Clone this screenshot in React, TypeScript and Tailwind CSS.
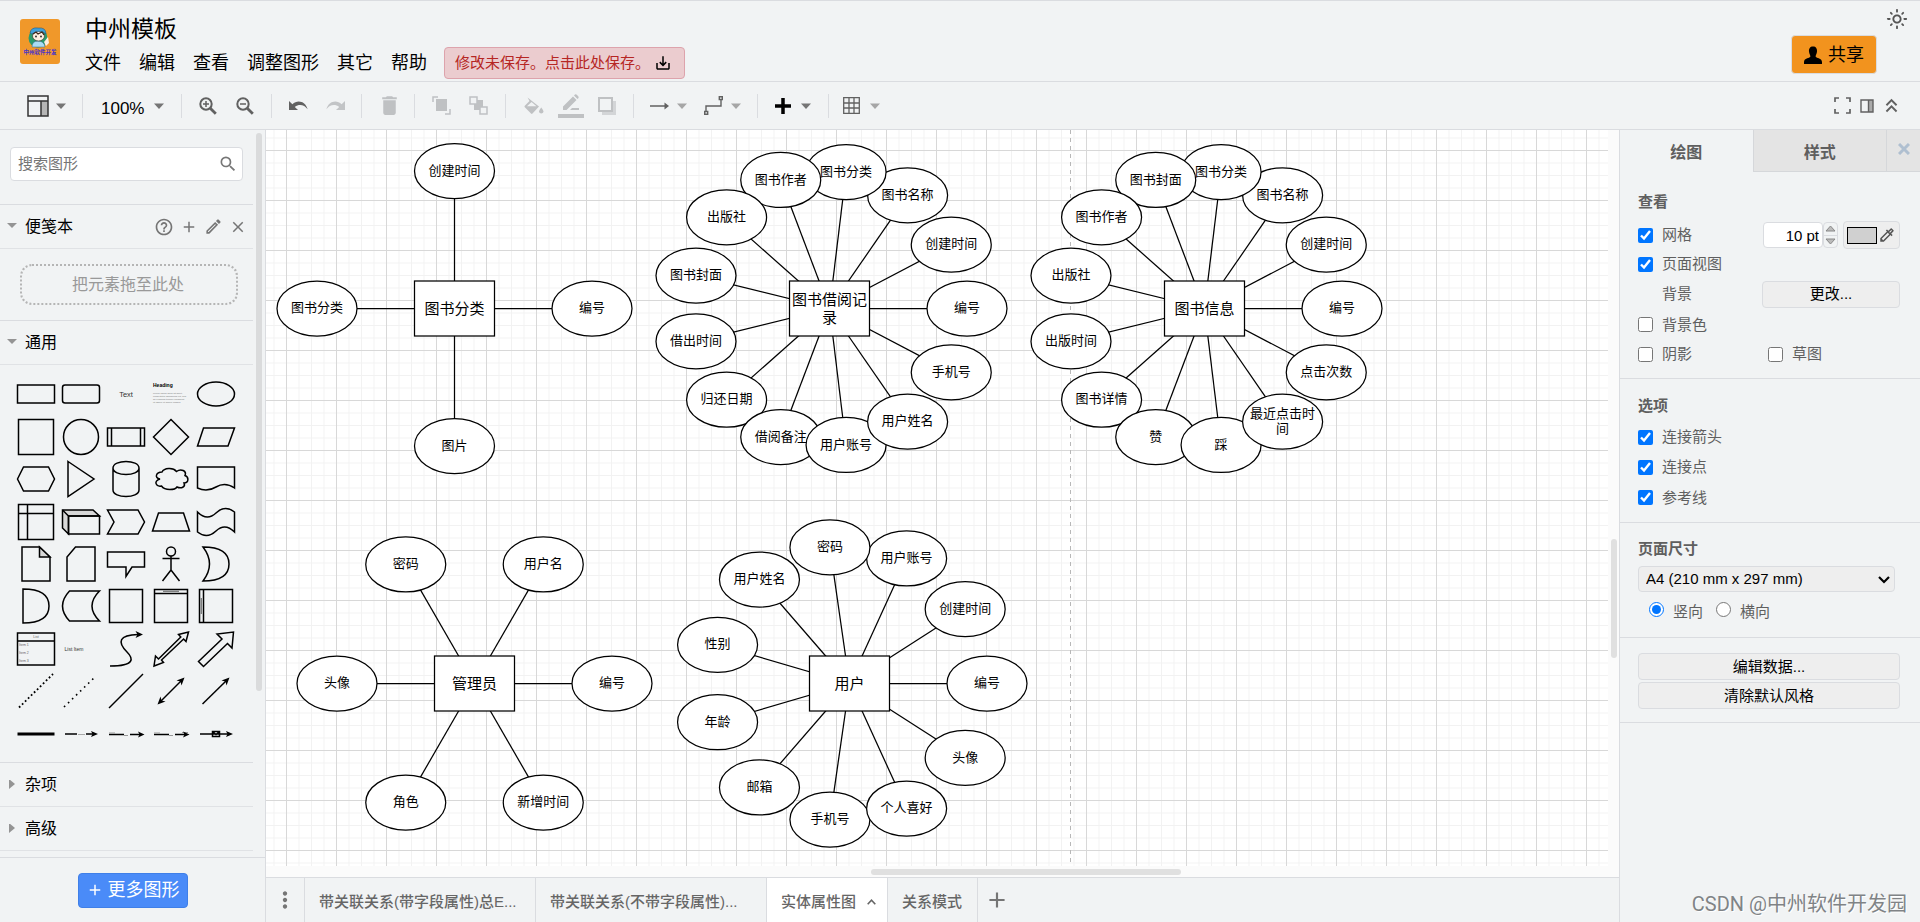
import { ReactNode, useState } from 'react';
import clsx from 'clsx';
import {
  MdAdd,
  MdClose,
  MdDelete,
  MdHelpOutline,
  MdKeyboardDoubleArrowUp,
  MdMoreVert,
  MdOutlineColorize,
  MdOutlineEdit,
  MdOutlineLightMode,
  MdSaveAlt,
  MdSearch,
} from 'react-icons/md';

interface Entity {
  name: string[];
  x: number;
  y: number;
  // counter-clockwise, starting on the right
  fields: string[];
}

const RADIUS = 137.5;
const NODE_W = 80;
const NODE_H = 55;
const MAX_CHARS = 5;

const ENTITIES: Entity[] = [
  { name: ['图书分类'], x: 188.5, y: 178.5, fields: ['编号', '创建时间', '图书分类', '图片'] },
  {
    name: ['图书借阅记', '录'],
    x: 563.5,
    y: 178.5,
    fields: [
      '编号', '创建时间', '图书名称', '图书分类', '图书作者', '出版社', '图书封面',
      '借出时间', '归还日期', '借阅备注', '用户账号', '用户姓名', '手机号',
    ],
  },
  {
    name: ['图书信息'],
    x: 938.5,
    y: 178.5,
    fields: [
      '编号', '创建时间', '图书名称', '图书分类', '图书封面', '图书作者', '出版社',
      '出版时间', '图书详情', '赞', '踩', '最近点击时间', '点击次数',
    ],
  },
  { name: ['管理员'], x: 208.5, y: 553.5, fields: ['编号', '用户名', '密码', '头像', '角色', '新增时间'] },
  {
    name: ['用户'],
    x: 583.5,
    y: 553.5,
    fields: ['编号', '创建时间', '用户账号', '密码', '用户姓名', '性别', '年龄', '邮箱', '手机号', '个人喜好', '头像'],
  },
];

function wrap(text: string): string[] {
  return text.length > MAX_CHARS ? [text.slice(0, MAX_CHARS), text.slice(MAX_CHARS)] : [text];
}

function Label({ lines, x, y, size, leading }: { lines: string[]; x: number; y: number; size: number; leading: number }) {
  return (
    <text x={x} textAnchor="middle" fontSize={size}>
      {lines.map((line, i) => (
        <tspan key={i} x={x} y={y + size * 0.36 + (i - (lines.length - 1) / 2) * leading}>
          {line}
        </tspan>
      ))}
    </text>
  );
}

function EntityGroup({ entity }: { entity: Entity }) {
  const nodes = entity.fields.map((field, i) => {
    const angle = (2 * Math.PI * i) / entity.fields.length;
    return {
      field,
      x: entity.x + RADIUS * Math.cos(angle),
      y: entity.y - RADIUS * Math.sin(angle),
    };
  });

  return (
    <g>
      {nodes.map((n, i) => (
        <line key={i} x1={entity.x} y1={entity.y} x2={n.x} y2={n.y} stroke="#000" strokeWidth={1.25} />
      ))}
      <rect
        x={entity.x - NODE_W / 2}
        y={entity.y - NODE_H / 2}
        width={NODE_W}
        height={NODE_H}
        fill="#fff"
        stroke="#000"
        strokeWidth={1.25}
      />
      <Label lines={entity.name} x={entity.x} y={entity.y} size={15} leading={18} />
      {nodes.map((n, i) => (
        <g key={i}>
          <ellipse cx={n.x} cy={n.y} rx={NODE_W / 2} ry={NODE_H / 2} fill="#fff" stroke="#000" strokeWidth={1.25} />
          <Label lines={wrap(n.field)} x={n.x} y={n.y - 1} size={13} leading={15} />
        </g>
      ))}
    </g>
  );
}

function Canvas() {
  return (
    <svg className="block h-full w-full bg-white">
      <defs>
        <pattern id="minor" x="20" y="20" width="12.5" height="12.5" patternUnits="userSpaceOnUse">
          <path d="M0.5 0V12.5M0 0.5H12.5" stroke="#f2f2f2" fill="none" />
        </pattern>
        <pattern id="major" x="20" y="20" width="50" height="50" patternUnits="userSpaceOnUse">
          <path d="M0.5 0V50M0 0.5H50" stroke="#d8d8d8" fill="none" />
        </pattern>
      </defs>
      <rect width="100%" height="100%" fill="url(#minor)" />
      <rect width="100%" height="100%" fill="url(#major)" />
      <line x1="804.5" y1="0" x2="804.5" y2="100%" stroke="#b8b8b8" strokeDasharray="4 4" />
      {ENTITIES.map((e, i) => (
        <EntityGroup key={i} entity={e} />
      ))}
    </svg>
  );
}

function Caret({ dark = false }: { dark?: boolean }) {
  return (
    <svg width="10" height="6" viewBox="0 0 10 6" className={dark ? 'text-[#757575]' : 'text-[#a6a6a6]'}>
      <path d="M0 0.5H10L5 6Z" fill="currentColor" />
    </svg>
  );
}

function ToolGroup({ className, children }: { className: string; children: ReactNode }) {
  return <div className={clsx('flex h-6 items-center border-r border-[#dadce0]', className)}>{children}</div>;
}

function ToolButton({ label, children, className }: { label: string; children: ReactNode; className?: string }) {
  return (
    <button aria-label={label} className={clsx('flex items-center', className)}>
      {children}
    </button>
  );
}

function Undo({ flip = false }: { flip?: boolean }) {
  return (
    <svg width="19" height="13" viewBox="0 0 19 13" className={flip ? '-scale-x-100 text-[#c2c4c6]' : 'text-[#616161]'}>
      <path d="M0 2V11H9L5.8 7.9C10 4.6 15.4 5.6 18.6 10.2C16.6 2.4 8.6 0.2 3.4 5.2Z" fill="currentColor" />
    </svg>
  );
}

function Magnifier({ plus = false }: { plus?: boolean }) {
  return (
    <svg width="18" height="18" viewBox="0 0 18 18" fill="none" stroke="#616161">
      <circle cx="7" cy="7" r="5.7" strokeWidth="2" />
      <path d="M11 11L16.8 16.8" strokeWidth="2.8" />
      <path d={plus ? 'M4 7H10M7 4V10' : 'M4 7H10'} strokeWidth="1.5" />
    </svg>
  );
}

function Toolbar() {
  return (
    <div className="flex h-12 items-center justify-between border-b border-[#dadce0]">
      <div className="flex items-center">
        <ToolGroup className="w-[83px] pl-[27px]">
          <ToolButton label="视图" className="gap-[7px]">
            <svg width="22" height="22" viewBox="0 0 22 22">
              <rect x="14" y="6" width="7" height="15" fill="#b5b5b5" />
              <path d="M1 1H21V21H1ZM1 6H21M14 6V21" fill="none" stroke="#333" strokeWidth="1.5" />
            </svg>
            <Caret dark />
          </ToolButton>
        </ToolGroup>
        <ToolGroup className="w-[99px] pl-[18px]">
          <button className="flex items-center gap-[10px] text-[17px]">
            <span className="pt-[6px] leading-5">100%</span>
            <Caret dark />
          </button>
        </ToolGroup>
        <ToolGroup className="w-[90px] justify-center gap-[19px]">
          <ToolButton label="放大"><Magnifier plus /></ToolButton>
          <ToolButton label="缩小"><Magnifier /></ToolButton>
        </ToolGroup>
        <ToolGroup className="w-[90px] justify-center gap-[18px]">
          <ToolButton label="撤销"><Undo /></ToolButton>
          <ToolButton label="重做"><Undo flip /></ToolButton>
        </ToolGroup>
        <ToolGroup className="w-[53px] justify-center pl-[2px]">
          <ToolButton label="删除"><MdDelete size={25} color="#bfc1c3" /></ToolButton>
        </ToolGroup>
        <ToolGroup className="w-[91px] justify-center gap-[18px]">
          <ToolButton label="移至最前">
            <svg width="19" height="19" viewBox="0 0 19 19">
              <path d="M1 6V1H6M18 13V18H13" fill="none" stroke="#bfc1c3" strokeWidth="1.5" />
              <rect x="4" y="3" width="11" height="12" fill="#bfc1c3" />
            </svg>
          </ToolButton>
          <ToolButton label="移至最后">
            <svg width="19" height="19" viewBox="0 0 19 19">
              <path d="M5 4H14V14H5Z" fill="#bfc1c3" />
              <path d="M1 1H8V8H1ZM11 11H18V18H11Z" fill="#f1f3f4" stroke="#bfc1c3" strokeWidth="1.5" />
            </svg>
          </ToolButton>
        </ToolGroup>
        <ToolGroup className="w-[128px] justify-center gap-[14px]">
          <ToolButton label="填充颜色">
            <svg width="20" height="18" viewBox="0 0 20 18" fill="#bfc1c3">
              <path d="M3.5 0.5L15 9.5L8.5 16.5C8 17 7.4 17 7 16.5L0.8 10.3C0.3 9.8 0.3 9.2 0.8 8.7L5.5 4Z" />
              <path d="M7.5 5L12.5 9.2H3Z" fill="#f1f3f4" />
              <path d="M17.2 10.5S19.5 13.2 19.5 14.8A2.3 2.3 0 0 1 15 14.8C15 13.2 17.2 10.5 17.2 10.5Z" />
            </svg>
          </ToolButton>
          <ToolButton label="线条颜色">
            <svg width="26" height="24" viewBox="0 0 26 24" fill="#bfc1c3">
              <path d="M5 16V12.5L15 2.5L18.5 6L8.5 16ZM16 1.5L17 0.5Q18 0 18.8 0.8L20.2 2.2Q21 3 20.5 4L19.5 5ZM12 16L14 14H21V16Z" />
              <rect y="20" width="26" height="4" />
            </svg>
          </ToolButton>
          <ToolButton label="阴影">
            <svg width="18" height="18" viewBox="0 0 18 18">
              <rect x="4" y="4" width="14" height="14" fill="#d3d5d7" />
              <rect x="1" y="1" width="13" height="13" fill="#f1f3f4" stroke="#bfc1c3" strokeWidth="2" />
            </svg>
          </ToolButton>
        </ToolGroup>
        <ToolGroup className="w-[124px] justify-center gap-[17px]">
          <ToolButton label="连接" className="gap-2">
            <svg width="19" height="8" viewBox="0 0 19 8">
              <path d="M0 4H16" stroke="#616161" strokeWidth="1.5" />
              <path d="M14.5 0.5L19 4L14.5 7.5Z" fill="#616161" />
            </svg>
            <Caret />
          </ToolButton>
          <ToolButton label="航点" className="gap-2">
            <svg width="19" height="19" viewBox="0 0 19 19">
              <path d="M2 15V10H17V4M0.7 15.5H3.7V18.3H0.7ZM15.3 0.7H18.3V3.5H15.3Z" fill="none" stroke="#616161" strokeWidth="1.4" />
            </svg>
            <Caret />
          </ToolButton>
        </ToolGroup>
        <ToolGroup className="w-[71px] justify-center">
          <ToolButton label="插入" className="gap-[10px]">
            <svg width="16" height="16" viewBox="0 0 16 16">
              <path d="M8 0V16M0 8H16" stroke="#000" strokeWidth="3.5" />
            </svg>
            <Caret dark />
          </ToolButton>
        </ToolGroup>
        <ToolButton label="表格" className="ml-[14px] gap-[10px]">
          <svg width="17" height="17" viewBox="0 0 17 17">
            <path
              d="M0.7 0.7H16.3V16.3H0.7ZM0.7 6H16.3M0.7 11H16.3M6 0.7V16.3M11 0.7V16.3"
              fill="none"
              stroke="#616161"
              strokeWidth="1.3"
            />
          </svg>
          <Caret />
        </ToolButton>
      </div>
      <div className="flex items-center gap-[9px] pr-[17px] text-[#616161]">
        <ToolButton label="全屏">
          <svg width="17" height="17" viewBox="0 0 17 17">
            <path d="M1 5V1H5M12 1H16V5M16 12V16H12M5 16H1V12" fill="none" stroke="currentColor" strokeWidth="1.7" />
          </svg>
        </ToolButton>
        <ToolButton label="格式">
          <svg width="14" height="14" viewBox="0 0 14 14">
            <rect x="9" y="1" width="4" height="12" fill="#aaa" />
            <path d="M1 1H13V13H1ZM8.5 1V13" fill="none" stroke="currentColor" strokeWidth="1.4" />
          </svg>
        </ToolButton>
        <ToolButton label="收起" className="-ml-[3px]"><MdKeyboardDoubleArrowUp size={23} /></ToolButton>
      </div>
    </div>
  );
}

function Logo() {
  return (
    <svg width="40" height="45" viewBox="0 0 40 45" className="rounded-[3px]">
      <rect width="40" height="45" fill="#f0982a" />
      <circle cx="18" cy="19" r="9.5" fill="#2a9a6b" />
      <path d="M12 28Q12 22 18 22T25 28Z" fill="#a9dcf3" stroke="#35658a" strokeWidth="0.5" />
      <ellipse cx="18.5" cy="17" rx="6" ry="5" fill="#fdeee2" stroke="#3b2a22" strokeWidth="0.6" />
      <path d="M10 14Q11 8 18 9Q26 8 26 15L23 13Q18 11 12 15Z" fill="#3f9fd8" stroke="#1b4d77" strokeWidth="0.5" />
      <path d="M13 15L16 13L18 15L22 13L24 16" fill="none" stroke="#40291e" strokeWidth="1.3" />
      <circle cx="16" cy="17.5" r="0.9" fill="#222" />
      <circle cx="21" cy="17.5" r="0.9" fill="#222" />
      <path d="M24 23L28 18L29 24L26 27Z" fill="#fdeee2" />
      <text x="20" y="35" textAnchor="middle" fontSize="5.5" fontWeight="bold" fill="#4a33c8">
        中州软件开发
      </text>
    </svg>
  );
}

function Header() {
  return (
    <header className="flex h-[82px] justify-between border-y border-[#dadce0] pl-5">
      <div className="flex gap-[25px]">
        <a href="#" aria-label="主页" className="mt-[18px] block h-[45px]">
          <Logo />
        </a>
        <div className="pt-[11px]">
          <h1 className="text-[23px] leading-[35px]">中州模板</h1>
          <div className="flex h-8 items-center">
            <nav className="flex gap-[18px] text-lg">
              {['文件', '编辑', '查看', '调整图形', '其它', '帮助'].map(item => (
                <button key={item}>{item}</button>
              ))}
            </nav>
            <button className="ml-[17px] flex h-8 items-center gap-1 rounded-[4px] border border-[#dda3ac] bg-[#ebcccf] pr-3 pl-[10px] text-[15px] text-[#b62623]">
              修改未保存。点击此处保存。
              <MdSaveAlt size={18} color="#000" />
            </button>
          </div>
        </div>
      </div>
      <div className="flex flex-col items-end pr-3">
        <button aria-label="外观" className="mt-[7px] text-[#555]">
          <MdOutlineLightMode size={22} />
        </button>
        <button className="mt-[5px] mr-[31px] flex h-[39px] w-[86px] items-center justify-center gap-[6px] rounded-[4px] border border-[#dadce0] bg-[#f2931e] text-lg">
          <svg width="18" height="18" viewBox="0 0 18 18">
            <path d="M9 0.5C12 0.5 13.2 2.6 13 5.5C12.8 8 11.8 8.8 11.6 10.5C11.8 12.3 18 11.8 18 16V18H0V16C0 11.8 6.2 12.3 6.4 10.5C6.2 8.8 5.2 8 5 5.5C4.8 2.6 6 0.5 9 0.5Z" />
          </svg>
          共享
        </button>
      </div>
    </header>
  );
}

const TINY = { fill: '#333', stroke: 'none' };

// every shape is drawn around 0,0
const SHAPES: { name: string; art: ReactNode }[] = [
  { name: '矩形', art: <rect x="-18.5" y="-9" width="37" height="18" /> },
  { name: '圆角矩形', art: <rect x="-18.5" y="-9" width="37" height="18" rx="2.5" /> },
  { name: '文本', art: <text y="2.5" textAnchor="middle" fontSize="7.5" {...TINY}>Text</text> },
  {
    name: '文本框',
    art: (
      <g {...TINY}>
        <text x="-18" y="-7" fontSize="5" fontWeight="bold" fill="#000">Heading</text>
        <g fill="#777">
          <text x="-18" y="-0.5" fontSize="2.4">Lorem ipsum dolor sit amet,</text>
          <text x="-18" y="2.5" fontSize="2.4">consectetur adipisicing elit, sed</text>
          <text x="-18" y="5.5" fontSize="2.4">do eiusmod tempor incididunt</text>
          <text x="-18" y="8.5" fontSize="2.4">ut labore et dolore magna.</text>
        </g>
      </g>
    ),
  },
  { name: '椭圆', art: <ellipse rx="18.5" ry="12" /> },

  { name: '正方形', art: <rect x="-17.5" y="-17.5" width="35" height="35" /> },
  { name: '圆', art: <circle r="17.5" /> },
  { name: '进程', art: <path d="M-18.5 -9H18.5V9H-18.5ZM-14.5 -9V9M14.5 -9V9" /> },
  { name: '菱形', art: <path d="M0 -17.5L17.5 0L0 17.5L-17.5 0Z" /> },
  { name: '平行四边形', art: <path d="M-18.5 9L-12.5 -9H18.5L12 9Z" /> },

  { name: '六边形', art: <path d="M-18.5 0L-12.5 -12H12.5L18.5 0L12.5 12H-12.5Z" /> },
  { name: '三角形', art: <path d="M-13 -17.5L13 0L-13 17.5Z" /> },
  { name: '圆柱体', art: <path d="M-13 -11V11C-13 19.7 13 19.7 13 11V-11C13 -19.7 -13 -19.7 -13 -11C-13 -2.3 13 -2.3 13 -11" /> },
  {
    name: '云',
    art: <path d="M-9 -7C-15 -7 -17 -1 -11 0C-18 2 -15 8 -9.5 7C-6 12 4 11 6 8C10 10 15 8 13 4C18 4 18 -2 14 -3.5C16 -8 10 -11 5.5 -7.5C2 -12 -7 -11 -9 -7Z" />,
  },
  { name: '文档', art: <path d="M-18.5 -12H18.5V9Q9 2.5 0 8T-18.5 9Z" /> },

  { name: '内部存储', art: <path d="M-17.5 -17.5H17.5V17.5H-17.5ZM-8.5 -17.5V17.5M-17.5 -8.5H17.5" /> },
  {
    name: '立方体',
    art: (
      <>
        <path d="M-18.5 -12H12L18.5 -6H-12.5V12L-18.5 6Z" fill="#d8d8d8" />
        <path d="M-18.5 -12L-12.5 -6H18.5V12H-12.5V-6" />
      </>
    ),
  },
  { name: '步骤', art: <path d="M-18.5 -12H12L18.5 0L12 12H-18.5L-12 0Z" /> },
  { name: '梯形', art: <path d="M-18.5 9L-12.5 -9H12.5L18.5 9Z" /> },
  { name: '磁带', art: <path d="M-18.5 -10Q-9 -0.5 0 -9T18.5 -10V10Q9 0.5 0 9T-18.5 10Z" /> },

  {
    name: '便签',
    art: (
      <>
        <path d="M-14 -17H3.5L14 -7V17H-14Z" />
        <path d="M3.5 -17V-7H14Z" fill="#d8d8d8" />
      </>
    ),
  },
  { name: '卡片', art: <path d="M-5.5 -17H14V17H-14V-7Z" /> },
  { name: '标注', art: <path d="M-18.5 -12H18.5V3H6L0 12.5V3H-18.5Z" /> },
  {
    name: '角色',
    art: (
      <>
        <circle cy="-12.5" r="4.5" />
        <path d="M0 -8V6M-8.5 -5.5H8.5M-8.5 17L0 6L8.5 17" />
      </>
    ),
  },
  { name: '或', art: <path d="M-13 -17Q13 -17 13 0T-13 17Q0 0 -13 -17Z" /> },

  { name: '与', art: <path d="M-13 -17Q13 -17 13 0T-13 17Z" /> },
  { name: '数据存储', art: <path d="M18.5 -15H-11.5Q-25.5 0 -11.5 15H18.5Q3.5 0 18.5 -15Z" /> },
  { name: '容器', art: <rect x="-16.5" y="-16.5" width="33" height="33" /> },
  {
    name: '垂直容器',
    art: (
      <>
        <path d="M-16.5 -16.5H16.5V16.5H-16.5ZM-16.5 -12.5H16.5" />
        <path d="M-8 -14.7H8" strokeWidth="0.6" />
      </>
    ),
  },
  {
    name: '水平容器',
    art: (
      <>
        <path d="M-16.5 -16.5H16.5V16.5H-16.5ZM-12.5 -16.5V16.5" />
        <path d="M-14.7 -8V8" strokeWidth="0.6" />
      </>
    ),
  },

  {
    name: '列表',
    art: (
      <>
        <path d="M-18.5 -16H18.5V16H-18.5ZM-18.5 -8H18.5" />
        <g fontSize="3.5" stroke="none" fill="#666">
          <text y="-11" textAnchor="middle">List</text>
          <text x="-17" y="-3">Item 1</text>
          <text x="-17" y="5">Item 2</text>
          <text x="-17" y="13">Item 3</text>
        </g>
      </>
    ),
  },
  { name: '列表项', art: <text x="-16.5" y="1.5" fontSize="5" {...TINY}>List Item</text> },
  {
    name: '曲线',
    art: (
      <>
        <path d="M-16 17C10 17 7 9 1 3C-9 -7 -7 -14 12 -14.5" />
        <path d="M17 -14.5L9.5 -18L11.5 -14.5L9.5 -11Z" fill="#000" stroke="none" />
      </>
    ),
  },
  {
    name: '双向箭头',
    art: <path d="M17.5 -17L15 -7.5L12.6 -10L-9.5 11L-7.5 13.5L-17 17L-15.5 7L-12.5 10L9.8 -12L7.5 -14.5Z" />,
  },
  { name: '箭头', art: <path d="M17.5 -17L16 -1L11.5 -5.5L-12.5 17.5L-17.5 12.5L6 -10L1 -15Z" /> },

  { name: '虚线', art: <path d="M-17 16.5L17 -17" strokeWidth="1.8" strokeDasharray="1.8 2.4" /> },
  { name: '点线', art: <path d="M-17 16L15 -15" strokeWidth="1.6" strokeDasharray="1.6 4" /> },
  { name: '直线', art: <path d="M-17 17L17 -17" /> },
  {
    name: '双向连接',
    art: (
      <>
        <path d="M-10 10L10 -10" />
        <path d="M13.5 -13.5L10.5 -5.5L9.5 -9.5L5.5 -10.5ZM-13.5 13.5L-10.5 5.5L-9.5 9.5L-5.5 10.5Z" fill="#000" stroke="none" />
      </>
    ),
  },
  {
    name: '单向连接',
    art: (
      <>
        <path d="M-13.5 13L10 -10" />
        <path d="M13.5 -13.5L10.5 -5.5L9.5 -9.5L5.5 -10.5Z" fill="#000" stroke="none" />
      </>
    ),
  },

  { name: '链接', art: <path d="M-18.5 0H18.5" strokeWidth="3" /> },
  {
    name: '带标签的连接',
    art: (
      <>
        <path d="M-16 0H-4M5 0H12" />
        <path d="M-3 0.5H4" stroke="#aaa" strokeWidth="1" />
        <path d="M17 0L10 -3L11.5 0L10 3Z" fill="#000" stroke="none" />
      </>
    ),
  },
  {
    name: '双标签连接',
    art: (
      <>
        <path d="M-17 0.5H-2M4 0.5H14" />
        <path d="M-17 -1H-11M-2 1.5H2" stroke="#999" strokeWidth="1" />
        <path d="M18.5 0.5L12 -2.5L13.5 0.5L12 3.5Z" fill="#000" stroke="none" />
      </>
    ),
  },
  {
    name: '三标签连接',
    art: (
      <>
        <path d="M-17 0.5H-2M4 0.5H14" />
        <path d="M-17 -1H-11M-2 1.5H2M11 -1.5H17" stroke="#999" strokeWidth="1" />
        <path d="M18.5 0.5L12 -2.5L13.5 0.5L12 3.5Z" fill="#000" stroke="none" />
      </>
    ),
  },
  {
    name: '带图标的连接',
    art: (
      <>
        <path d="M-16 0H12M-3.5 -2.5H3.5V2.5H-3.5ZM-3.5 -2.5L0 0.5L3.5 -2.5" />
        <path d="M17 0L10 -3L11.5 0L10 3Z" fill="#000" stroke="none" />
      </>
    ),
  },
];

function Triangle({ open }: { open: boolean }) {
  return (
    <svg width="10" height="10" viewBox="0 0 10 10" fill="#949494">
      {open ? <path d="M0 1H10L5 6Z" /> : <path d="M2 -1V9L8 4Z" />}
    </svg>
  );
}

function SectionTitle({ title, open = false, children }: { title: string; open?: boolean; children?: ReactNode }) {
  return (
    <div className="flex h-11 items-center justify-between border-b border-[#e0e2e5] pr-[6px] pl-[7px]">
      <button className="flex items-center gap-2 text-base" aria-expanded={open}>
        <Triangle open={open} />
        {title}
      </button>
      {children}
    </div>
  );
}

function Sidebar() {
  return (
    <aside className="flex w-[266px] shrink-0 flex-col border-r border-[#dadce0]">
      <div className="flex min-h-0 flex-1 justify-between overflow-hidden">
        <div className="w-[253px]">
          <div className="border-b border-[#dadce0] pt-[17px] pr-[10px] pb-[23px] pl-[10px]">
            <div className="flex h-[34px] items-center rounded-[4px] border border-[#dadce0] bg-white pr-1 pl-[7px]">
              <input
                aria-label="搜索图形"
                placeholder="搜索图形"
                className="min-w-0 flex-1 text-[15px] outline-none placeholder:text-[#757575]"
              />
              <button aria-label="搜索">
                <MdSearch size={20} color="#777" />
              </button>
            </div>
          </div>
          <SectionTitle title="便笺本" open>
            <div className="flex items-center gap-[6px] text-[#757575]">
              <button aria-label="帮助"><MdHelpOutline size={20} /></button>
              <button aria-label="添加"><MdAdd size={18} /></button>
              <button aria-label="编辑"><MdOutlineEdit size={19} /></button>
              <button aria-label="关闭"><MdClose size={18} /></button>
            </div>
          </SectionTitle>
          <div className="border-b border-[#dadce0] py-[15px] pr-[15px] pl-5">
            <div className="flex h-[41px] items-center justify-center rounded-[12px] border-2 border-dotted border-[#b5b5b5] pr-[2px] text-base text-[#999]">
              把元素拖至此处
            </div>
          </div>
          <SectionTitle title="通用" open />
          <div className="border-b border-[#dadce0] pt-2 pr-[15px] pb-[7px] pl-[13px]">
            <div className="grid h-[382px] grid-cols-5 grid-rows-9">
              {SHAPES.map(shape => (
                <button key={shape.name} aria-label={shape.name} className="flex items-center justify-center">
                  <svg width="42" height="40" viewBox="-21 -20 42 40" fill="none" stroke="#000" strokeWidth="1.5">
                    {shape.art}
                  </svg>
                </button>
              ))}
            </div>
          </div>
          <SectionTitle title="杂项" />
          <SectionTitle title="高级" />
        </div>
        <div className="mt-[3px] mr-[3px] h-[558px] w-[6px] rounded-full bg-[#dadbdc]" />
      </div>
      <div className="flex h-[65px] items-center justify-center border-t border-[#dadce0]">
        <button className="flex h-[35px] items-center gap-1 rounded-[4px] border border-[#3f7fe8] bg-[#4a8bf8] px-[7px] text-lg text-white">
          <MdAdd size={18} />
          更多图形
        </button>
      </div>
    </aside>
  );
}

function Check({ id, label, checked = false, className }: { id: string; label: string; checked?: boolean; className?: string }) {
  return (
    <div className={clsx('flex items-center gap-[9px]', className)}>
      <input id={id} type="checkbox" defaultChecked={checked} className="h-[15px] w-[15px]" />
      <label htmlFor={id}>{label}</label>
    </div>
  );
}

const panelButton = 'rounded-[4px] border border-[#dadce0] bg-[#eeeeee] text-black';

function FormatPanel() {
  return (
    <aside className="w-[301px] shrink-0 border-l border-[#dadce0] text-[15px] leading-5 text-[#5f5f5f]">
      <div className="flex h-[42px] text-base font-bold">
        <button className="flex-1 pt-2 pb-1">绘图</button>
        <button className="flex-1 border-b border-l border-[#d5d7da] bg-[#e4e4e4] pt-1">样式</button>
        <button aria-label="关闭" className="flex w-[34px] items-center justify-center border-b border-l border-[#d5d7da] bg-[#e4e4e4] pb-1 text-[#afbfd0]">
          <svg width="12" height="12" viewBox="0 0 12 12">
            <path d="M1 1L11 11M11 1L1 11" stroke="currentColor" strokeWidth="3" />
          </svg>
        </button>
      </div>

      <section className="border-b border-[#dadce0] pt-5 pr-5 pb-[9px] pl-[18px]">
        <h2 className="font-bold">查看</h2>
        <div className="mt-2 flex h-[30px] items-center">
          <Check id="grid" label="网格" checked className="w-[125px]" />
          <input
            aria-label="网格大小"
            defaultValue="10 pt"
            className="h-[26px] w-[60px] rounded-[4px] border border-[#dadce0] bg-white pr-[3px] text-right text-black"
          />
          <div className="flex h-[26px] w-[15px] flex-col rounded-[4px] border border-[#dadce0]">
            <button aria-label="增大" className="flex flex-1 items-center justify-center border-b border-[#dadce0]">
              <svg width="11" height="7" viewBox="0 0 11 7"><path d="M1 6H10L5.5 1Z" fill="#bbb" stroke="#888" /></svg>
            </button>
            <button aria-label="减小" className="flex flex-1 items-center justify-center">
              <svg width="11" height="7" viewBox="0 0 11 7"><path d="M1 1H10L5.5 6Z" fill="#bbb" stroke="#888" /></svg>
            </button>
          </div>
          <button aria-label="网格颜色" className={clsx(panelButton, 'ml-[5px] flex h-7 flex-1 items-center justify-between px-[3px]')}>
            <span className="block h-[17px] w-[30px] border border-black bg-[#d0d0d0]" />
            <MdOutlineColorize size={18} color="#555" />
          </button>
        </div>
        <Check id="page" label="页面视图" checked className="h-7" />
        <div className="flex h-8 items-center justify-between">
          <span className="pl-6">背景</span>
          <button className={clsx(panelButton, 'h-[27px] w-[138px]')}>更改...</button>
        </div>
        <Check id="bg" label="背景色" className="h-[29px]" />
        <div className="flex h-[30px] items-center">
          <Check id="shadow" label="阴影" className="w-[130px]" />
          <Check id="sketch" label="草图" />
        </div>
      </section>

      <section className="border-b border-[#dadce0] pt-[17px] pb-[9px] pl-[18px]">
        <h2 className="mb-[6px] font-bold">选项</h2>
        <Check id="arrows" label="连接箭头" checked className="h-[30px]" />
        <Check id="points" label="连接点" checked className="h-[30px]" />
        <Check id="guides" label="参考线" checked className="h-[31px]" />
      </section>

      <section className="border-b border-[#dadce0] pt-4 pr-[25px] pb-[15px] pl-[18px]">
        <h2 className="mb-[7px] font-bold">页面尺寸</h2>
        <div className="relative">
          <select aria-label="页面尺寸" className={clsx(panelButton, 'block h-[26px] w-full appearance-none pl-[7px]')}>
            <option>A4 (210 mm x 297 mm)</option>
          </select>
          <svg width="12" height="8" viewBox="0 0 12 8" className="pointer-events-none absolute top-[10px] right-[5px]">
            <path d="M1 1L6 6L11 1" fill="none" stroke="#000" strokeWidth="2.2" />
          </svg>
        </div>
        <div className="mt-[6px] flex items-center gap-[9px] pl-[11px]">
          <input id="portrait" type="radio" name="orientation" defaultChecked className="mb-[2px] h-[15px] w-[15px]" />
          <label htmlFor="portrait" className="pt-1">竖向</label>
          <input id="landscape" type="radio" name="orientation" className="mb-[2px] ml-1 h-[15px] w-[15px]" />
          <label htmlFor="landscape" className="pt-1">横向</label>
        </div>
      </section>

      <section className="flex flex-col gap-[2px] border-b border-[#dadce0] pt-[15px] pr-5 pb-[13px] pl-[18px]">
        <button className={clsx(panelButton, 'h-[27px]')}>编辑数据...</button>
        <button className={clsx(panelButton, 'h-[27px]')}>清除默认风格</button>
      </section>
    </aside>
  );
}

const PAGES = ['带关联关系(带字段属性)总E...', '带关联关系(不带字段属性)...', '实体属性图', '关系模式'];

function PageTabs() {
  const [active, setActive] = useState(2);

  return (
    <div className="flex h-[45px] border-t border-[#dadce0] text-[15px] text-[#666]">
      <button aria-label="页面" className="flex w-[39px] items-center justify-center border-r border-[#dadce0]">
        <MdMoreVert size={26} color="#757575" />
      </button>
      {PAGES.map((page, i) => (
        <button
          key={page}
          onClick={() => setActive(i)}
          className={clsx(
            'flex items-center border-r border-[#dadce0] pt-1 font-medium',
            i < 2 ? 'w-[231px] pl-[14px]' : 'pr-[15px] pl-[14px]',
            i === active && 'bg-white'
          )}
        >
          {page}
          {i === active && (
            <svg width="9" height="6" viewBox="0 0 9 6" className="-mr-1 ml-[11px]">
              <path d="M0.7 5.3L4.5 1.2L8.3 5.3" fill="none" stroke="#666" strokeWidth="1.6" />
            </svg>
          )}
        </button>
      ))}
      <button aria-label="添加页面" className="flex w-[37px] items-center justify-center">
        <MdAdd size={26} color="#757575" />
      </button>
    </div>
  );
}

export default function App() {
  return (
    <div className="relative flex h-screen flex-col overflow-hidden bg-[#f1f3f4] font-['Liberation_Sans','Noto_Sans_CJK_SC',sans-serif] text-black">
      <Header />
      <Toolbar />
      <div className="flex min-h-0 flex-1">
        <Sidebar />
        <main className="flex min-w-0 flex-1 flex-col">
          <div className="flex min-h-0 flex-1 bg-[#fbfbfb]">
            <div className="min-w-0 flex-1">
              <Canvas />
            </div>
            <div className="flex w-[11px] flex-col items-center justify-center pt-[200px]">
              <div className="h-[119px] w-[6px] rounded-full bg-[#e0e0e0]" />
            </div>
          </div>
          <div className="flex h-[11px] items-center justify-center bg-[#fbfbfb] pl-[166px]">
            <div className="h-[6px] w-[310px] rounded-full bg-[#e0e0e0]" />
          </div>
          <PageTabs />
        </main>
        <FormatPanel />
      </div>
      <div className="pointer-events-none absolute right-[13px] bottom-1 font-['Roboto','Noto_Sans_CJK_SC',sans-serif] text-xl text-[#808386] [text-shadow:1px_1px_0_#fff]">
        CSDN @中州软件开发园
      </div>
    </div>
  );
}
